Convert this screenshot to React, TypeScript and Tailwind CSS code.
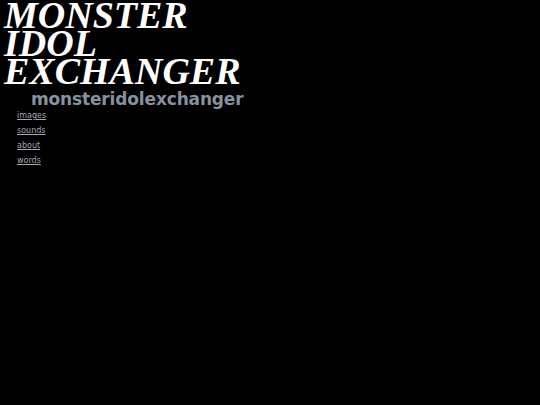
export default function App() {
  return (
    <div className="min-h-[405px] w-full bg-black">
      <div className="pt-[1px] pl-[4px]">
        <h1 className="text-white italic font-bold text-[38px] leading-[28px]" style={{ fontFamily: '"Liberation Serif", "Times New Roman", serif' }}>
          <div>MONSTER</div>
          <div>IDOL</div>
          <div>EXCHANGER</div>
        </h1>
        <div className="mt-[4px] pl-[27px] text-[#8792a0] font-bold text-[17px] leading-[20px] tracking-[-0.15px]" style={{ fontFamily: '"DejaVu Sans", Verdana, sans-serif' }}>
          monsteridolexchanger
        </div>
      </div>
      <ul className="pl-[17px] -mt-px flex flex-col" style={{ fontFamily: '"DejaVu Sans", Verdana, sans-serif' }}>
        {['images', 'sounds', 'about', 'words'].map((t) => (
          <li key={t} className="h-[15px] leading-[15px] text-[8px]">
            <a href="#" className="text-[#a0a8b2] underline">{t}</a>
          </li>
        ))}
      </ul>
    </div>
  );
}
